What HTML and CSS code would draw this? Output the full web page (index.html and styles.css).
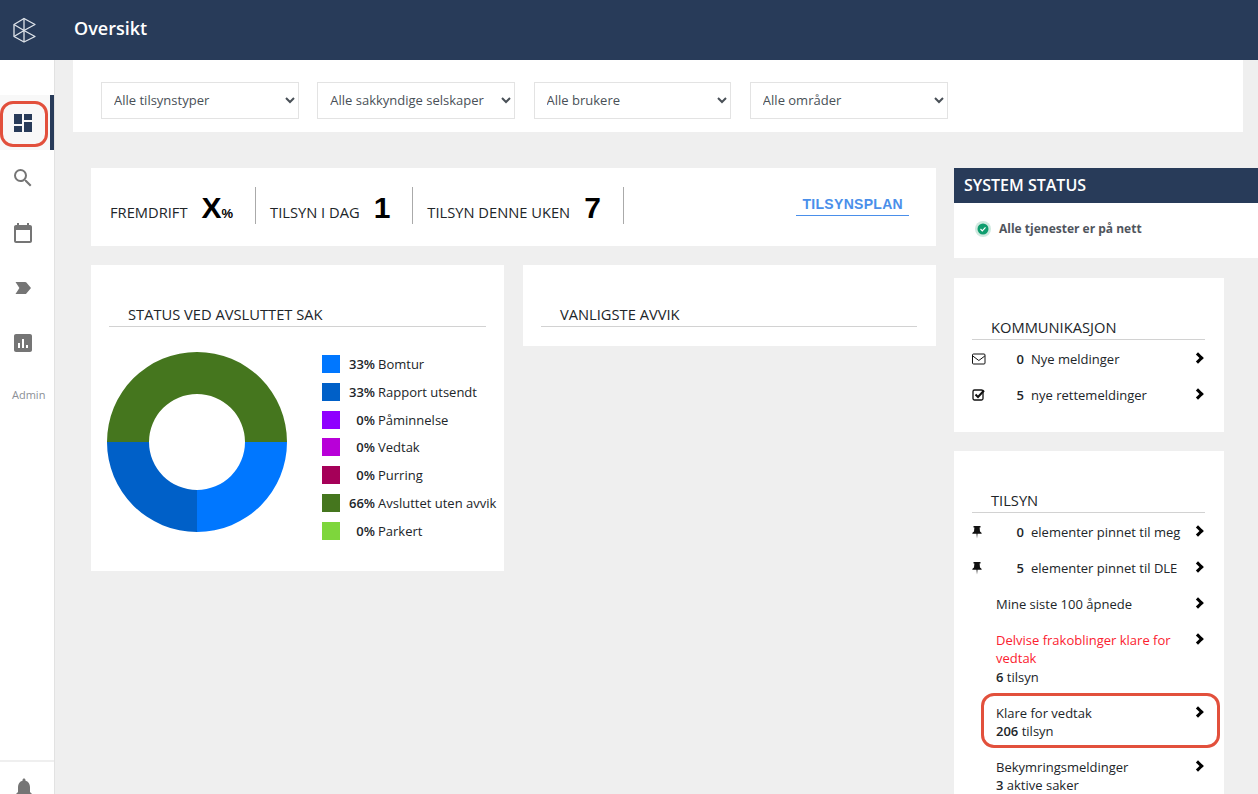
FILE: index.html
```html
<!doctype html>
<html lang="en">
<head>
    <meta charset="UTF-8">
    <title>Oversikt</title>
    <link rel="stylesheet" href="styles.css">
</head>
<body>
    <header class="topbar">
        <div class="logo">
            <svg width="24" height="28" viewBox="0 0 24 28" fill="none" stroke="#dfe4ea" stroke-width="1.300" stroke-linejoin="round">
                <path d="M11 2.500 22 8.500 11 14.500 22 20.500 11 26 1 20.500V8.500z"/>
                <path d="M1 8.500 11 14.500 1 20.500M11 2.500V26"/>
            </svg>
        </div>
        <h1>Oversikt</h1>
    </header>

    <div class="layout">
        <!-- Side menu -->
        <nav class="sidebar">
            <div class="nav-item active">
                <svg width="24" height="24" viewBox="0 0 24 24" fill="#283b59"><path d="M3 13h8V3H3v10zm0 8h8v-6H3v6zm10 0h8V11h-8v10zm0-18v6h8V3h-8z"/></svg>
                <span class="marker"></span>
            </div>
            <div class="nav-item">
                <svg width="24" height="24" viewBox="0 0 24 24" fill="#757575"><path d="M15.500 14h-.79l-.28-.27A6.470 6.470 0 0 0 16 9.500 6.500 6.500 0 1 0 9.500 16c1.610 0 3.090-.59 4.230-1.570l.27.28v.79l5 4.990L20.490 19l-4.990-5zm-6 0C7.010 14 5 11.990 5 9.500S7.010 5 9.500 5 14 7.010 14 9.500 11.990 14 9.500 14z"/></svg>
            </div>
            <div class="nav-item">
                <svg width="24" height="24" viewBox="0 0 24 24" fill="#757575"><path d="M19 4h-1V2h-2v2H8V2H6v2H5c-1.100 0-2 .9-2 2v14c0 1.100.9 2 2 2h14c1.100 0 2-.9 2-2V6c0-1.100-.9-2-2-2zm0 16H5V9h14v11z"/></svg>
            </div>
            <div class="nav-item">
                <svg width="24" height="24" viewBox="0 0 24 24" fill="#757575"><path d="M4.500 18h9.700c.5 0 .9-.2 1.200-.6L20 12l-4.600-5.400c-.3-.4-.7-.6-1.200-.6H4.500L8.400 12z"/></svg>
            </div>
            <div class="nav-item">
                <svg width="24" height="24" viewBox="0 0 24 24" fill="#757575"><path d="M19 3H5c-1.100 0-2 .9-2 2v14c0 1.100.9 2 2 2h14c1.100 0 2-.9 2-2V5c0-1.100-.9-2-2-2zM9 17H7v-5h2v5zm4 0h-2V8h2v9zm4 0h-2v-3h2v3z"/></svg>
            </div>
            <div class="nav-label">Admin</div>
            <div class="nav-bottom">
                <svg width="24" height="24" viewBox="0 0 24 24" fill="#757575"><path d="M12 22c1.100 0 2-.9 2-2h-4c0 1.100.9 2 2 2zm6-6v-5c0-3.070-1.630-5.640-4.500-6.320V4c0-.83-.67-1.500-1.500-1.500s-1.500.67-1.500 1.500v.68C7.640 5.360 6 7.920 6 11v5l-2 2v1h16v-1l-2-2z"/></svg>
            </div>
        </nav>

        <main class="main">
            <section class="filters">
                <select><option>Alle tilsynstyper</option></select>
                <select><option>Alle sakkyndige selskaper</option></select>
                <select><option>Alle brukere</option></select>
                <select><option>Alle områder</option></select>
            </section>

            <div class="columns">
                <div class="col-left">
                    <section class="card stats">
                        <div class="stat"><span>FREMDRIFT</span><b>X</b><small>%</small></div>
                        <div class="stat"><span>TILSYN I DAG</span><b>1</b></div>
                        <div class="stat"><span>TILSYN DENNE UKEN</span><b>7</b></div>
                        <a class="plan-link">TILSYNSPLAN</a>
                    </section>

                    <div class="chart-row">
                        <section class="card chart-card">
                            <h2 class="title">STATUS VED AVSLUTTET SAK</h2>
                            <div class="chart-body">
                                <svg class="donut" width="180" height="180" viewBox="0 0 180 180">
                                    <path d="M0 90a90 90 0 0 1 180 0h-42a48 48 0 0 0-96 0z" fill="#45761e"/>
                                    <path d="M180 90a90 90 0 0 1-90 90v-42a48 48 0 0 0 48-48z" fill="#0077ff"/>
                                    <path d="M90 180a90 90 0 0 1-90-90h42a48 48 0 0 0 48 48z" fill="#0060c8"/>
                                </svg>
                                <ul class="legend">
                                    <li><i class="c1"></i><b>33%</b>Bomtur</li>
                                    <li><i class="c2"></i><b>33%</b>Rapport utsendt</li>
                                    <li><i class="c3"></i><b>0%</b>Påminnelse</li>
                                    <li><i class="c4"></i><b>0%</b>Vedtak</li>
                                    <li><i class="c5"></i><b>0%</b>Purring</li>
                                    <li><i class="c6"></i><b>66%</b>Avsluttet uten avvik</li>
                                    <li><i class="c7"></i><b>0%</b>Parkert</li>
                                </ul>
                            </div>
                        </section>
                        <section class="card chart-card short">
                            <h2 class="title">VANLIGSTE AVVIK</h2>
                        </section>
                    </div>
                </div>

                <aside class="col-right">
                    <section class="card status">
                        <h2>SYSTEM STATUS</h2>
                        <p>
                            <svg class="status-ico" width="16" height="16" viewBox="0 0 16 16">
                                <circle cx="8" cy="8" r="8" fill="#cfe9df"/>
                                <circle cx="8" cy="8" r="5.500" fill="#0f9d6e"/>
                                <path d="M5.500 8 7.300 9.800 10.500 6.400" fill="none" stroke="#fff" stroke-width="1.200"/>
                            </svg>
                            Alle tjenester er på nett
                        </p>
                    </section>

                    <section class="card side-card">
                        <h2 class="title">KOMMUNIKASJON</h2>
                        <div class="row">
                            <svg class="ico" width="14" height="14" viewBox="0 0 14 14" fill="none" stroke="#111" stroke-width="1"><rect x=".5" y="2" width="12.500" height="10" rx="1"/><path d="M.8 4 6.800 8.500 12.800 4"/></svg>
                            <b class="num">0</b><span>Nye meldinger</span><span class="chev"></span>
                        </div>
                        <div class="row">
                            <svg class="ico" width="14" height="14" viewBox="0 0 14 14" fill="none" stroke="#111"><rect x="1" y="2" width="10" height="10" rx="1.500" stroke-width="1.300"/><path d="M3.500 6.500 6 9l6-6.500" stroke-width="2"/></svg>
                            <b class="num">5</b><span>nye rettemeldinger</span><span class="chev"></span>
                        </div>
                    </section>

                    <section class="card side-card">
                        <h2 class="title">TILSYN</h2>
                        <div class="row">
                            <svg class="ico pin" width="14" height="14" viewBox="0 0 14 14" fill="#111"><path d="M3.500 1h7v1.500H9.600l.4 4c1 .5 1.700 1.300 1.700 2.200H7.500L7 13.500 6.500 8.700H2.300c0-.9.700-1.700 1.700-2.200l.4-4H3.500z"/></svg>
                            <b class="num">0</b><span>elementer pinnet til meg</span><span class="chev"></span>
                        </div>
                        <div class="row">
                            <svg class="ico pin" width="14" height="14" viewBox="0 0 14 14" fill="#111"><path d="M3.500 1h7v1.500H9.600l.4 4c1 .5 1.700 1.300 1.700 2.200H7.500L7 13.500 6.500 8.700H2.300c0-.9.700-1.700 1.700-2.200l.4-4H3.500z"/></svg>
                            <b class="num">5</b><span>elementer pinnet til DLE</span><span class="chev"></span>
                        </div>
                        <div class="item"><div>Mine siste 100 åpnede</div><span class="chev"></span></div>
                        <div class="item"><div><span class="alert">Delvise frakoblinger klare for vedtak</span><br><b>6</b> tilsyn</div><span class="chev"></span></div>
                        <div class="item"><div>Klare for vedtak<br><b>206</b> tilsyn</div><span class="chev"></span></div>
                        <div class="item"><div>Bekymringsmeldinger<br><b>3</b> aktive saker</div><span class="chev"></span></div>
                    </section>
                </aside>
            </div>
        </main>
    </div>

    <!-- Red markings drawn on top of the screenshot -->
    <div class="mark mark-nav"></div>
    <div class="mark mark-item"></div>
</body>
</html>
```

FILE: styles.css
```css
* {
    box-sizing: border-box;
}
html, body {
    height: 794px;
    overflow: hidden;
}
body {
    margin: 0;
    font-family: "Open Sans", sans-serif;
    font-size: 13px;
    color: #212529;
    background-color: #efefef;
    position: relative;
}
.topbar {
    height: 60px;
    background: #283b59;
    color: #fff;
    display: flex;
    align-items: center;
}
.logo {
    width: 74px;
    padding-left: 13px;
    display: flex;
}
.topbar h1 {
    margin: 0 0 5px;
    font-size: 18px;
    font-weight: 600;
}
.layout {
    display: flex;
    height: 734px;
}
.sidebar {
    width: 55px;
    flex-shrink: 0;
    background: #fff;
    border-right: 1px solid #e2e2e2;
    padding-top: 35px;
    display: flex;
    flex-direction: column;
}
.nav-item {
    height: 55px;
    display: flex;
    align-items: center;
    justify-content: center;
    padding-right: 8px;
    position: relative;
}
.nav-item.active {
    background: #f8f8f8;
}
.marker {
    position: absolute;
    right: 0;
    top: 0;
    bottom: 0;
    width: 4px;
    background: #283b59;
}
.nav-label {
    margin-top: 17px;
    padding-left: 12px;
    font-size: 11px;
    color: #8b8f96;
}
.nav-bottom {
    margin-top: auto;
    height: 34px;
    border-top: 2px solid #efefef;
    padding: 14px 0 0 12px;
}
.main {
    flex: 1;
    padding-left: 18px;
}
.filters {
    margin-right: 15px;
    height: 72px;
    background: #fff;
    padding: 22px 28px 0;
    display: flex;
    gap: 18.600px;
    align-items: flex-start;
}
.filters select {
    width: 197.700px;
    height: 37px;
    padding: 0 8px 2px;
    font-family: inherit;
    font-size: 13px;
    color: #495057;
    background: #fff;
    border: 1px solid #e3e3e3;
    border-radius: 0;
}
.columns {
    margin-top: 36px;
    padding-left: 18px;
    display: flex;
    gap: 18px;
}
.col-left {
    width: 845px;
    flex-shrink: 0;
}
.col-right {
    width: 304px;
    flex-shrink: 0;
    display: flex;
    flex-direction: column;
    gap: 20px;
}
.card {
    background: #fff;
}
.stats {
    height: 78px;
    padding: 19px 27px 0 19px;
    display: flex;
    align-items: flex-start;
}
.stat {
    height: 37px;
    padding: 3px 22px 0 0;
    margin-right: 14px;
    border-right: 1px solid #aaa;
    display: flex;
    align-items: baseline;
    font-size: 14.700px;
}
.stat b {
    font-family: "Liberation Sans", sans-serif;
    font-size: 30px;
    font-weight: 700;
    line-height: 36px;
    color: #000;
    margin-left: 14px;
}
.stat small {
    font-family: "Liberation Sans", sans-serif;
    font-size: 13px;
    font-weight: 700;
    color: #000;
}
.plan-link {
    margin: 7px 0 0 auto;
    padding: 2px 6px 0;
    height: 22px;
    font-family: "Liberation Sans", sans-serif;
    font-size: 14px;
    font-weight: 700;
    letter-spacing: .3px;
    color: #4a8fea;
    border-bottom: 1px solid #4a8fea;
}
.chart-row {
    margin-top: 19px;
    display: flex;
    gap: 19px;
    align-items: flex-start;
}
.chart-card {
    width: 413px;
    height: 306px;
    padding: 40px 18px 0;
}
.chart-card.short {
    height: 81px;
    padding-right: 19px;
}
.title {
    margin: 0;
    height: 22px;
    padding-left: 19px;
    font-size: 14.700px;
    font-weight: 400;
    line-height: 18px;
    color: #212529;
    border-bottom: 1px solid #d2d2d2;
}
.chart-body {
    margin: 25px 0 0 -2px;
    display: flex;
}
.donut {
    flex-shrink: 0;
}
.legend {
    list-style: none;
    margin: 3px 0 0 35px;
    padding: 0;
}
.legend li {
    height: 27.800px;
    display: flex;
    white-space: nowrap;
    align-items: flex-start;
    line-height: 18px;
}
.legend i {
    width: 18px;
    height: 18px;
    margin-right: 9px;
}
.legend b {
    width: 26px;
    flex-shrink: 0;
    font-weight: 600;
    text-align: right;
    margin-right: 3px;
}
.c1 { background: #0077ff; }
.c2 { background: #0060c8; }
.c3 { background: #8f00ff; }
.c4 { background: #b800d8; }
.c5 { background: #a50058; }
.c6 { background: #45761e; }
.c7 { background: #7ed63c; }
.status {
    height: 90px;
}
.status h2 {
    margin: 0;
    height: 35px;
    padding-left: 10px;
    background: #283b59;
    color: #fff;
    font-size: 16px;
    font-weight: 600;
    line-height: 35px;
}
.status p {
    margin: 17px 0 0 21px;
    display: flex;
    align-items: center;
    font-size: 12px;
    font-weight: 700;
    color: #50555d;
}
.status-ico {
    margin-right: 8px;
}
.side-card {
    width: 270px;
    height: 154px;
    padding: 40px 19px 17px 18px;
}
.side-card + .side-card {
    height: auto;
    margin-top: -1px;
}
.row {
    display: flex;
    align-items: center;
    height: 36px;
    padding-top: 2px;
}
.ico {
    flex-shrink: 0;
}
.pin {
    margin: 0 2px 0 -2px;
}
.num {
    width: 38px;
    margin-right: 7px;
    text-align: right;
    font-weight: 600;
}
.item {
    display: flex;
    justify-content: space-between;
    align-items: flex-start;
    padding: 8px 0 10px 24px;
    line-height: 1.400;
}
.row + .item {
    margin-top: 2px;
}
.item b {
    font-weight: 600;
}
.alert {
    color: #fb2130;
}
.chev {
    flex-shrink: 0;
    width: 8px;
    height: 8px;
    margin: 4px 3px 0 0;
    border-top: 3px solid #000;
    border-right: 3px solid #000;
    transform: rotate(45deg);
}
.row .chev {
    margin: -2px 3px 0 auto;
}
.mark {
    position: absolute;
    border: 3.500px solid #e2503c;
    border-radius: 13px;
    pointer-events: none;
}
.mark-nav {
    left: 0;
    top: 101px;
    width: 48px;
    height: 46px;
}
.mark-item {
    left: 981px;
    top: 693px;
    width: 239px;
    height: 55px;
}
```
